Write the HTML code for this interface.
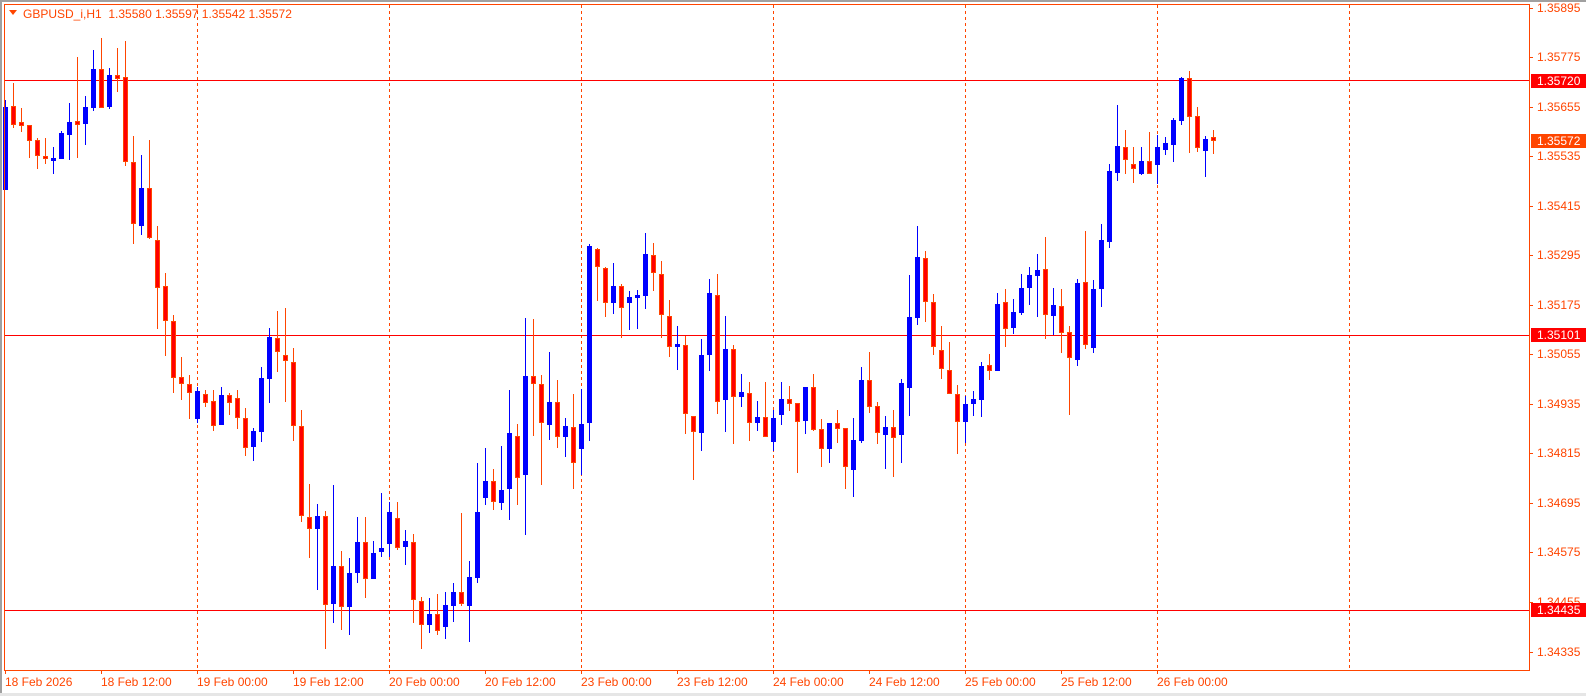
<!DOCTYPE html>
<html><head><meta charset="utf-8"><style>
html,body{margin:0;padding:0;background:#fff;width:1586px;height:696px;overflow:hidden}
svg{display:block}
text{font-family:"Liberation Sans",sans-serif;font-size:12px}
</style></head><body>
<svg id="s" width="1586" height="696" xmlns="http://www.w3.org/2000/svg">
<rect x="0" y="0" width="1586" height="696" fill="#fff"/>
<rect x="0" y="0" width="1586" height="2" fill="#a0a0a0"/>
<rect x="0" y="0" width="2" height="696" fill="#a0a0a0"/>
<rect x="0" y="693" width="1586" height="3" fill="#e6e6e6"/>
<g id="grid" stroke="#ff4500" stroke-width="1" stroke-dasharray="3,3">
<line x1="197.5" y1="5" x2="197.5" y2="670"/>
<line x1="389.5" y1="5" x2="389.5" y2="670"/>
<line x1="581.5" y1="5" x2="581.5" y2="670"/>
<line x1="773.5" y1="5" x2="773.5" y2="670"/>
<line x1="965.5" y1="5" x2="965.5" y2="670"/>
<line x1="1157.5" y1="5" x2="1157.5" y2="670"/>
<line x1="1349.5" y1="5" x2="1349.5" y2="670"/>
</g>
<g stroke="#ff0000" stroke-width="1">
<line x1="4" y1="80.5" x2="1529" y2="80.5"/>
<line x1="4" y1="335.5" x2="1529" y2="335.5"/>
<line x1="4" y1="610.5" x2="1529" y2="610.5"/>
</g>
<g id="c"></g>
<rect x="4.5" y="4.5" width="1525" height="666" fill="none" stroke="#ff4500" stroke-width="1"/>
<g fill="#ff4500">
<path d="M9 10 L17 10 L13 15 Z"/>
<text x="23" y="18" style="white-space:pre">GBPUSD_i,H1  1.35580 1.35597 1.35542 1.35572</text>
</g>
<g id="ticks" stroke="#ff4500"></g>
<g fill="#ff4500">
<text x="1537" y="12">1.35895</text>
<text x="1537" y="61">1.35775</text>
<text x="1537" y="111">1.35655</text>
<text x="1537" y="160">1.35535</text>
<text x="1537" y="210">1.35415</text>
<text x="1537" y="259">1.35295</text>
<text x="1537" y="309">1.35175</text>
<text x="1537" y="358">1.35055</text>
<text x="1537" y="408">1.34935</text>
<text x="1537" y="457">1.34815</text>
<text x="1537" y="507">1.34695</text>
<text x="1537" y="556">1.34575</text>
<text x="1537" y="606">1.34455</text>
<text x="1537" y="656">1.34335</text>
</g>
<rect x="1531" y="74" width="55" height="14" fill="#ff0000"/>
<text x="1537" y="85" fill="#fff">1.35720</text>
<rect x="1531" y="134" width="55" height="14" fill="#ff4500"/>
<text x="1537" y="145" fill="#fff">1.35572</text>
<rect x="1531" y="328" width="55" height="14" fill="#ff0000"/>
<text x="1537" y="339" fill="#fff">1.35101</text>
<rect x="1531" y="603" width="55" height="14" fill="#ff0000"/>
<text x="1537" y="614" fill="#fff">1.34435</text>
<g fill="#ff4500">
<text x="5" y="686">18 Feb 2026</text>
<text x="101" y="686">18 Feb 12:00</text>
<text x="197" y="686">19 Feb 00:00</text>
<text x="293" y="686">19 Feb 12:00</text>
<text x="389" y="686">20 Feb 00:00</text>
<text x="485" y="686">20 Feb 12:00</text>
<text x="581" y="686">23 Feb 00:00</text>
<text x="677" y="686">23 Feb 12:00</text>
<text x="773" y="686">24 Feb 00:00</text>
<text x="869" y="686">24 Feb 12:00</text>
<text x="965" y="686">25 Feb 00:00</text>
<text x="1061" y="686">25 Feb 12:00</text>
<text x="1157" y="686">26 Feb 00:00</text>
</g>
</svg>
<script>
var d=[
"b100,107,190,190","r83,106,125,128","r108,122,126,132","r125,125,141,158","r138,140,156,169","r138,156,159,164","b147,158,161,174","b131,133,159,159","b103,122,135,160","r57,121,125,158",
"b96,107,124,145","b50,69,108,111","r38,69,108,108","b68,75,107,109","r48,75,79,92","r41,77,162,166","r136,162,224,244","b155,188,226,235","r140,188,238,239","r226,240,288,329",
"r273,286,321,356","r315,321,378,393","r357,377,384,400","r375,384,393,419","b387,391,419,423","r390,394,403,407","r390,401,426,431","b387,395,425,425","r393,395,403,415","r390,398,418,429",
"r408,418,448,456","b428,431,447,461","b367,378,432,442","b328,337,379,403","r311,338,352,372","r308,355,361,402","r348,362,426,441","r410,426,516,522","r484,517,529,558","b504,516,529,590",
"r511,516,605,649","b485,566,604,623","r551,566,607,630","b558,573,607,635","b517,542,573,583","r517,542,579,598","b541,553,579,579","b493,548,552,557","b502,512,544,557","r502,518,548,550",
"b530,541,547,565","r534,542,600,623","r597,601,625,649","b598,614,625,633","r594,614,631,635","b592,605,627,639","b583,592,606,622","r513,592,604,606","b561,577,606,642","b463,512,578,583",
"b448,481,498,505","r469,481,502,510","b446,490,503,510","b390,433,489,520","r424,436,478,505","b318,376,475,535","r319,376,384,436","r375,384,423,485","b352,402,425,440","r380,402,437,448",
"b418,426,437,457","r394,427,463,489","b389,424,449,475","b244,246,423,441","r248,249,267,301","r267,268,303,317","b263,286,303,314","r284,286,308,338","b291,297,303,330","b290,295,298,329",
"b233,254,296,309","r243,255,273,291","r261,274,315,338","r300,316,347,357","b326,344,347,370","r336,345,414,434","r416,416,432,480","b339,355,433,451","b279,293,355,371","r274,295,402,414",
"b316,349,400,432","r345,349,397,444","b374,392,397,407","r382,393,423,441","b401,417,423,431","r382,417,437,437","b410,418,442,451","b382,399,415,425","r386,399,404,411","r403,403,422,473",
"b387,387,421,434","r374,387,430,431","r419,429,449,467","b423,423,449,463","r410,423,429,443","r428,428,467,489","b418,440,470,497","b367,380,441,443","r352,380,407,413","r402,406,433,444",
"b416,427,435,469","r410,427,438,477","b379,383,435,463","b275,317,388,416","b226,257,318,325","r251,258,302,322","r294,302,347,355","r326,350,369,379","r342,370,394,394","r385,394,422,454",
"b396,404,422,443","b391,399,404,416","b362,366,400,417","r354,365,371,380","b293,304,371,371","r289,302,329,347","b299,312,328,334","b274,288,313,315","b267,275,288,305","b254,270,276,317",
"r237,269,315,339","b288,305,316,335","r289,306,333,353","r326,332,358,415","b279,283,360,366","r231,282,345,349","b280,289,348,353","b224,240,289,307","b164,171,242,248","b105,146,173,181",
"r130,147,160,174","r147,164,169,183","b147,161,174,175","r132,161,174,174","b135,147,165,184","b137,143,150,155","b118,120,145,162","b77,78,121,125","r71,78,117,153","r107,116,148,152",
"b136,139,151,177","r130,137,141,154"];
var g=document.getElementById("c"),h="";
d.forEach(function(s,i){var c=s[0],v=s.slice(1).split(",").map(Number);var x=5+8*i;
var hi=v[0],t=v[1],b=v[2],lo=v[3];if(b-t<1)b=t+1;
var col=c=="b"?"#0000ff":"#ff4500";
h+='<rect x="'+x+'" y="'+hi+'" width="1" height="'+Math.max(1,lo-hi)+'" fill="'+col+'"/>';
if(c=="b"){h+='<rect x="'+(x-2)+'" y="'+t+'" width="5" height="'+(b-t)+'" fill="#0000ff"/>';}
else{h+='<rect x="'+(x-2)+'" y="'+t+'" width="5" height="'+(b-t)+'" fill="#ff4500"/>';
if(b-t>2)h+='<rect x="'+(x-1)+'" y="'+(t+1)+'" width="3" height="'+(b-t-2)+'" fill="#ff0000"/>';}
});
g.innerHTML=h;
var tk="";[8,57,107,156,206,255,305,354,404,453,503,552,602,652].forEach(function(y){tk+='<line x1="1529" y1="'+(y+0.5)+'" x2="1533" y2="'+(y+0.5)+'"/>';});
for(var k=0;k<13;k++){var x=5+96*k+0.5;tk+='<line x1="'+x+'" y1="670" x2="'+x+'" y2="674"/>';}
document.getElementById("ticks").innerHTML=tk;
</script>
</body></html>
